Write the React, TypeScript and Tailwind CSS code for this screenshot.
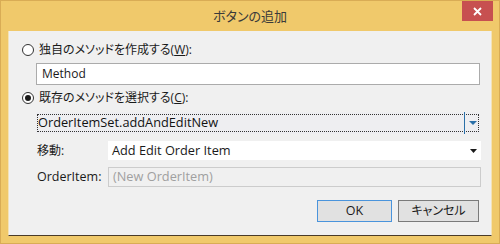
import React from "react";

const jp = "font-['Open_Sans','Noto_Sans_CJK_JP',sans-serif]";

function Radio({ checked }: { checked?: boolean }) {
  return (
    <div className="w-[12px] h-[12px] rounded-full border border-[#333333] bg-white flex items-center justify-center shrink-0">
      {checked && <div className="w-[6px] h-[6px] rounded-full bg-[#1a1a1a]" />}
    </div>
  );
}

export default function App() {
  return (
    <div className={`w-[500px] h-[244px] bg-[#F0C96B] border border-[#D9AC55] flex flex-col ${jp}`}>
      <div className="h-[30px] relative flex items-center justify-center shrink-0">
        <span className="text-[13px] text-[#3a3a3a] [font-feature-settings:'palt'] mt-[1px]">ボタンの追加</span>
        <div className="absolute right-[6px] top-0 w-[31px] h-[20px] bg-[#C75050] flex items-center justify-center">
          <svg width="9" height="9" viewBox="0 0 9 9">
            <path d="M1 1 L8 8 M8 1 L1 8" stroke="white" strokeWidth="1.8" />
          </svg>
        </div>
      </div>
      <div className="mx-[7px] h-[205px] bg-[#F0F0F0] border-b border-[#4A3B28] border-l border-r border-l-[#F3E2B8] border-r-[#F3E2B8] flex flex-col text-[12px] text-[#1a1a1a]">
        {/* radio 1 */}
        <div className="mt-[11px] h-[16px] flex items-center pl-[13px]">
          <Radio />
          <span className="ml-[5px] [font-feature-settings:'palt']">
            独自のメソッドを作成する(<span className="underline">W</span>):
          </span>
        </div>
        {/* textbox */}
        <div className="mt-[5px] ml-[27px] w-[444px] h-[22px] bg-white border border-[#ABABAB] flex items-center pl-[5px] text-[12px]">
          Method
        </div>
        {/* radio 2 */}
        <div className="mt-[5px] h-[16px] flex items-center pl-[13px]">
          <Radio checked />
          <span className="ml-[5px] [font-feature-settings:'palt']">
            既存のメソッドを選択する(<span className="underline">C</span>):
          </span>
        </div>
        {/* combo focused */}
        <div className="mt-[6px] ml-[27px] w-[444px] h-[22px] bg-[#EEEEF1] relative flex items-center">
          <div className="absolute left-[1px] top-[2px] right-[1px] bottom-[2px] border border-dotted border-[#333]" />
          <span className="pl-[2px] text-[12.75px] text-[#111]">OrderItemSet.addAndEditNew</span>
          <div className="absolute right-[15px] top-0 bottom-0 w-[1px] bg-[#2A6FA8]" />
          <svg className="absolute right-[3px] top-[9px]" width="8" height="4" viewBox="0 0 8 4">
            <path d="M0 0 L8 0 L4 4 Z" fill="#2A6FA8" />
          </svg>
        </div>
        {/* 移動 */}
        <div className="mt-[7px] flex items-center h-[19px]">
          <span className="ml-[28px] w-[71px] [font-feature-settings:'palt']">移動:</span>
          <div className="w-[373px] h-[19px] bg-white relative flex items-center pl-[4px] text-[12.75px]">
            Add Edit Order Item
            <svg className="absolute right-[4px] top-[8px]" width="7" height="4" viewBox="0 0 7 4">
              <path d="M0 0 L7 0 L3.5 4 Z" fill="#1a1a1a" />
            </svg>
          </div>
        </div>
        {/* OrderItem */}
        <div className="mt-[7px] flex items-center h-[20px]">
          <span className="ml-[28px] w-[71px] text-[12.5px]">OrderItem:</span>
          <div className="w-[373px] h-[20px] border border-[#CCCCCC] bg-[#F0F0F0] flex items-center pl-[4px] text-[12.75px] text-[#A0A0A0]">
            (New OrderItem)
          </div>
        </div>
        {/* buttons */}
        <div className="mt-[13px] flex justify-end pr-[12px] gap-[6px]">
          <div className="w-[75px] h-[22px] bg-[#E1E1E1] border border-[#4A94DC] flex items-center justify-center text-[12.5px]">OK</div>
          <div className="w-[81px] h-[22px] bg-[#E1E1E1] border border-[#7A7A7A] flex items-center justify-center [font-feature-settings:'palt']">キャンセル</div>
        </div>
      </div>
    </div>
  );
}
